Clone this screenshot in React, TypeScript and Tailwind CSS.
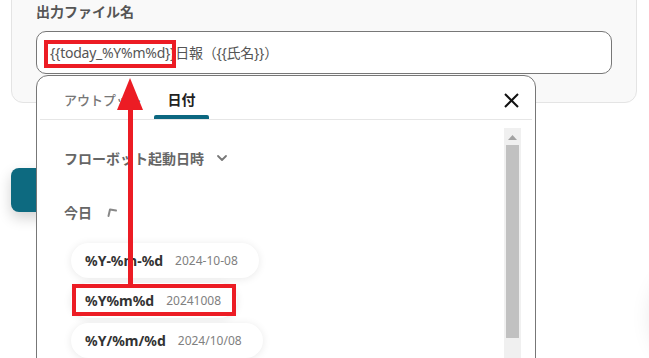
import React from "react";

const pills = [
  { fmt: "%Y-%m-%d", sample: "2024-10-08" },
  { fmt: "%Y%m%d", sample: "20241008" },
  { fmt: "%Y/%m/%d", sample: "2024/10/08" },
];

function ChevronDown() {
  return (
    <svg width="12" height="12" viewBox="0 0 12 12" fill="none">
      <path d="M2 4 L6 8 L10 4" stroke="#777" strokeWidth="1.8" strokeLinecap="round" strokeLinejoin="round" />
    </svg>
  );
}

export default function App() {
  return (
    <div className="relative w-[649px] h-[358px] overflow-hidden bg-white font-['Noto_Sans','Noto_Sans_CJK_JP',sans-serif]">
      {/* 設定カード */}
      <div className="mx-[11px] mt-[-20px] w-[626px] rounded-xl border border-[#e4e4e4] bg-[#f9f9f9] px-[24px] pt-[19px] pb-[28px]">
        <div className="h-6 text-[14px] leading-6 font-bold text-[#555]">出力ファイル名</div>
        <div className="mt-[7px] flex h-[43px] w-[576px] items-center rounded-[10px] border border-[#777] bg-white pl-[13px] text-[14px] tracking-[-0.25px] text-[#555]">
          {"{{today_%Y%m%d}}日報（{{氏名}}）"}
        </div>
      </div>

      {/* 後ろのボタン */}
      <div className="ml-[11px] mt-[65px] h-[44px] w-[200px] rounded-lg bg-[#0d6a80] shadow-[0_6px_14px_rgba(0,0,0,0.18)]" />

      {/* 右下のフローティング要素の影 */}
      <div className="absolute left-[652px] top-[262px] h-[110px] w-[110px] rounded-full bg-white shadow-[0_0_22px_rgba(0,0,0,0.10)]" />

      {/* ポップアップ */}
      <div className="absolute left-[36px] top-[75px] flex h-[300px] w-[500px] flex-col rounded-t-[12px] border border-[#777] bg-white">
        <div className="mx-[3px] flex h-[44px] items-end border-b border-[#e6e6e6]">
          <div className="w-[114px] pb-[9px] pl-[24px] text-[13px] leading-5 font-medium text-[#777]">アウトプット</div>
          <div className="flex h-full w-[55px] flex-col items-center justify-end">
            <div className="pb-[5px] text-[14px] leading-5 font-bold text-[#222]">日付</div>
            <div className="h-[4px] w-full rounded-t-[2px] bg-[#0b6780]" />
          </div>
          <div className="flex-1" />
          <div className="mb-[11px] mr-[13px] flex h-[16px] w-[16px] items-center justify-center">
            <svg width="15" height="15" viewBox="0 0 15 15">
              <path d="M1 1 L14 14 M14 1 L1 14" stroke="#111" strokeWidth="2" />
            </svg>
          </div>
        </div>

        <div className="flex flex-1">
          <div className="flex-1 pl-[27px] pt-[26px]">
            <div className="flex h-6 items-center gap-[12px] text-[14px] font-bold text-[#666]">
              フローボット起動日時
              <ChevronDown />
            </div>
            <div className="mt-[30px] flex h-6 items-center gap-[14px] text-[14px] font-bold text-[#666]">
              今日
              <svg width="12" height="12" viewBox="0 0 12 12" fill="none">
                <path d="M2.5 10 L4 3.5 L10 4.5" stroke="#888" strokeWidth="2" strokeLinecap="round" strokeLinejoin="round" />
              </svg>
            </div>
            <div className="ml-[7px] mt-[19px] flex flex-col items-start gap-[5px]">
              {pills.map((p, i) => (
                <div
                  key={p.fmt}
                  className={`flex h-[35px] items-center gap-[12px] rounded-full bg-white pl-[14px] shadow-[0_1px_8px_rgba(0,0,0,0.09)] ${i === 1 ? "pr-[16px]" : "pr-[21px]"}`}
                >
                  <span className="text-[14px] font-bold text-[#333]">{p.fmt}</span>
                  <span className="text-[12px] text-[#808080]">{p.sample}</span>
                </div>
              ))}
            </div>
          </div>
          {/* スクロールバー */}
          <div className="mr-[14px] mt-[8px] flex w-[17px] flex-col items-center bg-[#f0f0f0]">
            <svg width="9" height="5" viewBox="0 0 9 5" className="mt-[7px]">
              <path d="M0 5 L4.5 0 L9 5 Z" fill="#a3a3a3" />
            </svg>
            <div className="mt-[5px] h-[193px] w-[13px] bg-[#c1c1c1]" />
          </div>
        </div>
      </div>

      {/* 注釈 */}
      <div className="absolute left-[44px] top-[40px] h-[28px] w-[132px] border-[4px] border-[#ec1c24]" />
      <div className="absolute left-[72px] top-[284px] h-[32px] w-[164px] border-[4px] border-[#ec1c24]" />
      <svg className="absolute left-0 top-0" width="649" height="358" viewBox="0 0 649 358">
        <path d="M130 78 L143 110 L117 110 Z" fill="#ec1c24" />
        <rect x="128" y="105" width="5" height="180" fill="#ec1c24" />
      </svg>
    </div>
  );
}
